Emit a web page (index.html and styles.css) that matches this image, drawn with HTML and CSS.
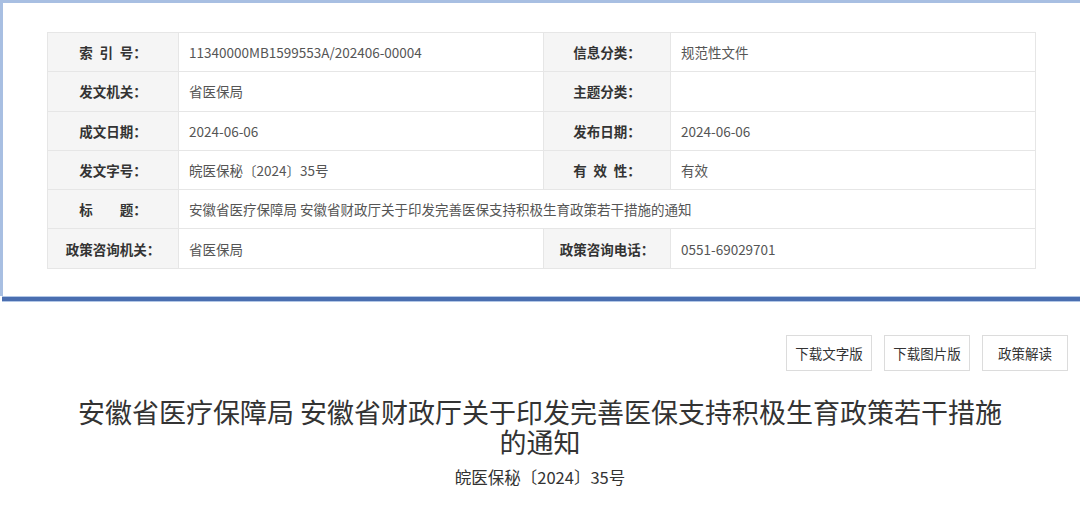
FILE: index.html
```html
<!DOCTYPE html>
<html lang="zh-CN">
<head>
    <meta charset="UTF-8">
    <meta name="viewport" content="width=device-width, initial-scale=1.0">
    <title>安徽省医疗保障局 安徽省财政厅关于印发完善医保支持积极生育政策若干措施的通知</title>
    <link rel="stylesheet" href="styles.css">
</head>
<body>

    <div class="info-panel">
        <table class="info-table">
            <colgroup>
                <col class="col-label">
                <col class="col-value">
                <col class="col-label2">
                <col class="col-value">
            </colgroup>
            <tr>
                <th>索&ensp;引&ensp;号：</th>
                <td>11340000MB1599553A/202406-00004</td>
                <th>信息分类：</th>
                <td>规范性文件</td>
            </tr>
            <tr>
                <th>发文机关：</th>
                <td>省医保局</td>
                <th>主题分类：</th>
                <td></td>
            </tr>
            <tr>
                <th>成文日期：</th>
                <td>2024-06-06</td>
                <th>发布日期：</th>
                <td>2024-06-06</td>
            </tr>
            <tr>
                <th>发文字号：</th>
                <td>皖医保秘〔2024〕35号</td>
                <th>有&ensp;效&ensp;性：</th>
                <td>有效</td>
            </tr>
            <tr>
                <th>标&emsp;&emsp;题：</th>
                <td colspan="3">安徽省医疗保障局 安徽省财政厅关于印发完善医保支持积极生育政策若干措施的通知</td>
            </tr>
            <tr>
                <th>政策咨询机关：</th>
                <td>省医保局</td>
                <th>政策咨询电话：</th>
                <td>0551-69029701</td>
            </tr>
        </table>
    </div>

    <div class="divider"></div>

    <div class="article">
        <div class="tools">
            <a class="tool-btn" href="#">下载文字版</a>
            <a class="tool-btn" href="#">下载图片版</a>
            <a class="tool-btn" href="#">政策解读</a>
        </div>
        <h1 class="article-title">安徽省医疗保障局 安徽省财政厅关于印发完善医保支持积极生育政策若干措施的通知</h1>
        <p class="article-no">皖医保秘〔2024〕35号</p>
    </div>

</body>
</html>
```

FILE: styles.css
```css
* {
    margin: 0;
    padding: 0;
    box-sizing: border-box;
}

body {
    background: #fff;
    font-family: "Noto Sans CJK SC", "Noto Sans", sans-serif;
    color: #333;
}

.info-panel {
    height: 296px;
    border-top: 3px solid #a8bfe2;
    border-left: 3px solid #a8bfe2;
    padding: 29px 0 0 44px;
}

.info-table {
    width: 988px;
    border-collapse: collapse;
    table-layout: fixed;
    font-size: 13.5px;
}

.col-label {
    width: 131px;
}

.col-label2 {
    width: 127px;
}

.col-value {
    width: 365px;
}

.info-table th,
.info-table td {
    height: 39.3px;
    border: 1px solid #e6e6e6;
    white-space: nowrap;
}

.info-table th {
    background: #f5f5f5;
    color: #333;
    font-weight: bold;
    text-align: center;
}

.info-table td {
    color: #555;
    text-align: left;
    padding-left: 10px;
}

.divider {
    margin-left: 2px;
    height: 6px;
    border-top: 1px solid #b3c7e6;
    border-bottom: 1px solid #b3c7e6;
    background: #4a6eb0;
}

.article {
    padding: 33px 12px 0 0;
}

.tools {
    display: flex;
    justify-content: flex-end;
    gap: 12px;
}

.tool-btn {
    width: 86px;
    height: 36px;
    display: flex;
    align-items: center;
    justify-content: center;
    border: 1px solid #dcdcdc;
    color: #333;
    font-size: 13.5px;
    text-decoration: none;
}

.article-title {
    width: 940px;
    margin: 26px auto 0;
    padding-left: 12px;
    font-size: 27px;
    line-height: 30px;
    font-weight: normal;
    color: #333;
    text-align: center;
}

.article-no {
    margin-top: 8px;
    padding-left: 12px;
    font-size: 16.5px;
    line-height: 24px;
    color: #333;
    text-align: center;
}
```
